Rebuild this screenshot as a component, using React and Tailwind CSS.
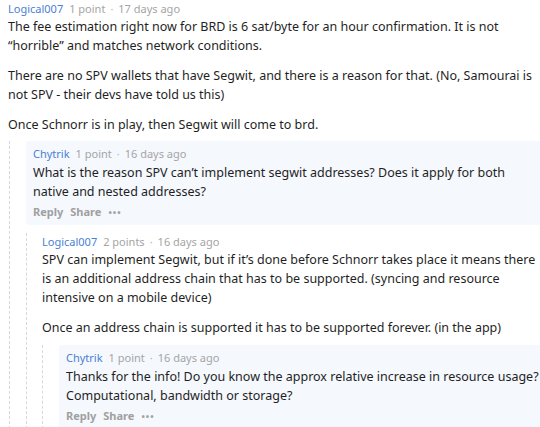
import React from 'react'

const font = { fontFamily: '"Noto Sans", "Open Sans", sans-serif' }

const Header = ({ user, points, age }) => (
  <div className="flex items-center text-[11px] leading-[16px]">
    <span className="text-[#4a7fd4]">{user}</span>
    <span className="ml-[6px] text-[#a5a5a5]">{points}</span>
    <span className="mx-[5px] text-[#b8b8b8]">·</span>
    <span className="text-[#a5a5a5]">{age}</span>
  </div>
)

const Actions = () => (
  <div className="flex items-center gap-[7px] h-[22px] text-[11px] font-bold text-[#a0a0a0]">
    <span>Reply</span>
    <span>Share</span>
    <span className="tracking-[1px] text-[9px] leading-none">•••</span>
  </div>
)

const Body = ({ paragraphs }) => (
  <div className="text-[12.5px] leading-[19px] text-[#1f1f1f]">
    {paragraphs.map((p, i) => (
      <p key={i} className={i > 0 ? 'mt-[11px]' : ''}>{p}</p>
    ))}
  </div>
)

const App = () => {
  return (
    <div className="w-[540px] h-[427px] overflow-hidden bg-white" style={font}>
      <div className="pl-[8px] pr-[4px] pt-[1px]">
        <Header user="Logical007" points="1 point" age="17 days ago" />
        <Body
          paragraphs={[
            'The fee estimation right now for BRD is 6 sat/byte for an hour confirmation. It is not “horrible” and matches network conditions.',
            'There are no SPV wallets that have Segwit, and there is a reason for that. (No, Samourai is not SPV - their devs have told us this)',
            'Once Schnorr is in play, then Segwit will come to brd.',
          ]}
        />
      </div>

      <div className="ml-[9px] mt-[7px] border-l border-dashed border-[#d8d8d8] pl-[16px]">
        <div className="bg-[#f5f8fd] rounded-l-[3px] pl-[7px] pt-[5px] pb-[2px]">
          <Header user="Chytrik" points="1 point" age="16 days ago" />
          <div className="mt-[1px]">
            <Body paragraphs={['What is the reason SPV can’t implement segwit addresses? Does it apply for both native and nested addresses?']} />
          </div>
          <Actions />
        </div>

        <div className="mt-[8px] border-l border-dashed border-[#d8d8d8] pl-[15px]">
          <div className="pt-[1px]">
            <Header user="Logical007" points="2 points" age="16 days ago" />
            <Body
              paragraphs={[
                'SPV can implement Segwit, but if it’s done before Schnorr takes place it means there is an additional address chain that has to be supported. (syncing and resource intensive on a mobile device)',
                'Once an address chain is supported it has to be supported forever. (in the app)',
              ]}
            />
          </div>

          <div className="mt-[8px] border-l border-dashed border-[#d8d8d8] pl-[16px]">
            <div className="bg-[#f5f8fd] rounded-l-[3px] pl-[7px] pt-[5px] pb-[2px]">
              <Header user="Chytrik" points="1 point" age="16 days ago" />
              <div className="mt-[1px]">
                <Body paragraphs={['Thanks for the info! Do you know the approx relative increase in resource usage? Computational, bandwidth or storage?']} />
              </div>
              <Actions />
            </div>
          </div>
        </div>
      </div>
    </div>
  )
}

export default App
